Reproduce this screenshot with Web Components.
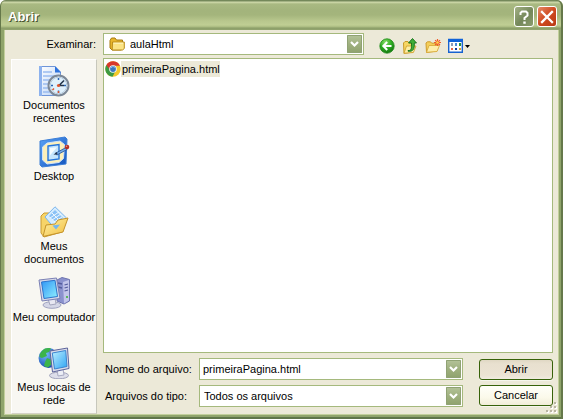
<!DOCTYPE html>
<html lang="pt-BR">
<head>
<meta charset="utf-8">
<title>Abrir</title>
<style>
html, body { height: 100%; margin: 0; }
body { background: #fff; font: 11px/13px "Liberation Sans", Arial, sans-serif; color: #000; }
</style>
</head>
<body>
<open-dialog></open-dialog>
<script>
const ICONS = {
  help: `<svg viewBox="0 0 20 20" width="20" height="20"><path d="M6.500 8V6L8 4.500h4L13.500 6v2.500L10.500 11v2" fill="none" stroke="#fff" stroke-width="2"/><path d="M9.300 14.500h2.400v2.200H9.300z" fill="#fff"/></svg>`,
  close: `<svg viewBox="0 0 20 20" width="20" height="20"><path d="M5 5l10 10M15 5L5 15" stroke="#fff" stroke-width="2.300" stroke-linecap="square"/></svg>`,
  chevron: `<svg viewBox="0 0 15 18" width="15" height="18"><path d="M4 7l3.500 3.500L11 7" fill="none" stroke="#fff" stroke-width="2.200"/></svg>`,
  folder: `<svg viewBox="0 0 16 16" width="16" height="16"><path d="M1 4.500L2.500 2H6l1.500 2H13.500V13L12 14H3L1 12z" fill="#e9b62c" stroke="#a67a10"/><path d="M3.500 6H15.300V12.500L13.500 14H3.200z" fill="#fbe384" stroke="#b98c1c"/><path d="M4.500 7.200H14" stroke="#fff6c4"/></svg>`,
  chrome: `<svg viewBox="0 0 16 16" width="16" height="16"><circle cx="8" cy="8" r="7.700" fill="#f3c92c"/><path d="M8 8L1.400 4A7.700 7.700 0 0 0 7.500 15.700L10.500 10z" fill="#3d9a43"/><path d="M1.400 4A7.700 7.700 0 0 1 15 4.800H8L5 9z" fill="#d8382c"/><circle cx="8" cy="8" r="3.800" fill="#f4f7fa"/><circle cx="8" cy="8" r="2.900" fill="#3c78bd"/><path d="M6 7a2.200 2.200 0 0 1 3.800-.5" stroke="#9cc7ef" fill="none"/></svg>`,
  back: `<svg viewBox="0 0 16 16" width="16" height="16"><defs><radialGradient id="g" cx=".4" cy=".25" r=".8"><stop offset="0" stop-color="#8be06b"/><stop offset=".5" stop-color="#2fac22"/><stop offset="1" stop-color="#11730e"/></radialGradient></defs><circle cx="8" cy="8" r="7.200" fill="url(#g)" stroke="#1f8a19" stroke-width=".8"/><path d="M12.500 8H4.500M8.200 4L4.300 8l3.900 4" fill="none" stroke="#fff" stroke-width="2"/></svg>`,
  up: `<svg viewBox="0 0 16 16" width="16" height="16"><path d="M1.500 5L3 3.500H6L7 5h4v9L2 15.500z" fill="#f7d765" stroke="#c79a29"/><path d="M2 15.200L4.500 8H14l-2.600 6.500z" fill="#fdeea5" stroke="#d0a431" stroke-width=".9"/><path d="M6 12.500c3.500 .3 3.500-1.500 3.500-7.500H6.500L10.500 .5l4 4.500h-2.200c.2 6-.8 8.800-6.300 8.200z" fill="#3fae38" stroke="#14701a" stroke-width=".9"/></svg>`,
  newfolder: `<svg viewBox="0 0 16 16" width="16" height="16"><path d="M1 5L2.500 3.800H5.500L6.700 5.200H12V13L1.500 14.500z" fill="#f4cf59" stroke="#cf9c2c"/><path d="M1.500 14.300L4 7.500h10.500L12 13.500z" fill="#fdeeaa" stroke="#d9ab3c" stroke-width=".9"/><path d="M12.500 1v7M9 4.500h7M10.100 2.100l4.900 4.900M15 2.100L10.100 7" stroke="#ef5a29" stroke-width="1.200"/><circle cx="12.500" cy="4.500" r="1.300" fill="#ffd44d"/></svg>`,
  views: `<svg viewBox="0 0 23 16" width="23" height="16"><path d="M.7 1.500H14.300V14.300H.7z" fill="#fff" stroke="#1763cf" stroke-width="1.400"/><path d="M0 1h15v3H0z" fill="#0f62d8"/><path d="M3 5h2v3H3z" fill="#8f9bb5"/><path d="M7 5h2v3H7z" fill="#498ad8"/><path d="M11 5h2v3h-2z" fill="#25913a"/><path d="M3 10h2v2H3z" fill="#e2674c"/><path d="M7 10h2v2H7z" fill="#123a9c"/><path d="M11 10h2v2h-2z" fill="#d9a32b"/><path d="M17 7h5l-2.500 3z" fill="#000"/></svg>`,
  recent: `<svg viewBox="0 0 32 32" width="32" height="32"><defs><linearGradient id="p" x2="1" y2="1"><stop stop-color="#fff"/><stop offset="1" stop-color="#b9d2f6"/></linearGradient></defs><path d="M1.500 1.500H17L22.500 7V30.500H1.500z" fill="url(#p)" stroke="#6f95d8"/><path d="M1 1h3v30H1z" fill="#8db2ee"/><path d="M17 1v6.500h6z" fill="#2f73dc"/><path d="M5 7h9M5 11h13M5 15h8M5 19h5M5 23h5M5 27h8" stroke="#9bbcf0" stroke-width="1.500"/><circle cx="20.500" cy="20.500" r="10" fill="#f7fbff" stroke="#7b8796" stroke-width="2"/><circle cx="20.500" cy="20.500" r="8.300" fill="#dff0fc" stroke="#afc7dc"/><path d="M21 20.500l5-5M21 20.500h5" stroke="#24374e" stroke-width="1.600"/><path d="M20.500 13v2M28 20.500h-2M13 20.500h2M20.500 28v-2.500" stroke="#2a64b4" stroke-width="1.500"/><circle cx="20.500" cy="20.500" r="1.600" fill="#e0542b"/><path d="M14.500 25l1.500-1.500M20.500 28v-2" stroke="#e0542b" stroke-width="1.500"/></svg>`,
  desktop: `<svg viewBox="0 0 32 32" width="32" height="32"><defs><linearGradient id="d" x2="1" y2="1"><stop stop-color="#5ba4f7"/><stop offset="1" stop-color="#1252bc"/></linearGradient></defs><path d="M2 5L27 1l2 2-1 25L4 31l-2-2z" fill="url(#d)" stroke="#3d7fd6"/><path d="M4.500 11L9 7l13-2 4.500 3.500-1 14-4.500 4-12 1.500-4.500-4z" fill="#fdf0ba" stroke="#cfe3fa"/><path d="M10 10l11-1.500V23l-11 1.500z" fill="#c5e5fd" stroke="#2475dc" stroke-width="1.400"/><path d="M12 12l7-.8-7 8z" fill="#f4fbff"/><path d="M17 17.500l11-6 1 2-10 5.500z" fill="#75aeea" stroke="#1f4d93" stroke-width=".8"/><path d="M15.500 18.700l3-2.700 1.200 2.200z" fill="#26364d"/><circle cx="29" cy="11" r="2.300" fill="#b53227"/><circle cx="28.500" cy="10.300" r=".8" fill="#f09e83"/></svg>`,
  documents: `<svg viewBox="0 0 32 32" width="32" height="32"><defs><linearGradient id="f" x2="1" y2="1"><stop stop-color="#fff3a9"/><stop offset="1" stop-color="#f2bd3e"/></linearGradient></defs><path d="M3 10l3-3h5l2 2 11 2v15L6 31l-3-4z" fill="#f7d468" stroke="#c99a30"/><path d="M7 11L17 .8 28.500 12 18 24z" fill="#d4ecff" stroke="#79b4ec"/><path d="M11 10l6-6 8 8-6 5z" fill="#8bc2f6"/><path d="M12 12l9-6M14 14l9-6M16 16l8-5M14 7l9 9" stroke="#eef8ff"/><path d="M5 30.500L8 19l9-1 3-4 10-2-5 14z" fill="url(#f)" stroke="#c4932b"/><path d="M14.500 19.500l3.500 4 4-5z" fill="#74b7ef"/></svg>`,
  computer: `<svg viewBox="0 0 32 32" width="32" height="32"><defs><linearGradient id="s" x2="1" y2="1"><stop stop-color="#2f95f5"/><stop offset="1" stop-color="#8ff0ff"/></linearGradient></defs><path d="M19 3l5-2.500 7.500 2V24L26 27l-7-3z" fill="#8b92cd" stroke="#6e74af"/><path d="M25 5l6-2v20.500L26 26.500z" fill="#c2c5ea"/><path d="M20 6l4 1M20 10l4 1M26.500 8l3.500-1M26.500 11l3.500-1M26.500 14l3.500-1" stroke="#545b9c" stroke-width="1.300"/><path d="M28 19h2v2h-2z" fill="#59b75b"/><ellipse cx="14" cy="28" rx="9" ry="3.300" fill="#d4d6e6" stroke="#9fa2bf"/><path d="M10 22l7-1 1 6-6 1z" fill="#e8e8f2" stroke="#a4a6bd"/><path d="M1 3L18.500 1 22 21.500 4 24z" fill="#d6d8e9" stroke="#7b81b5"/><path d="M3.500 5L17 3.300 19.500 19.500 6 21.500z" fill="url(#s)" stroke="#2d74cb"/></svg>`,
  network: `<svg viewBox="0 0 32 32" width="32" height="32"><defs><linearGradient id="n" x2="1" y2="1"><stop stop-color="#bcefff"/><stop offset="1" stop-color="#2fa4f3"/></linearGradient><radialGradient id="e" cx=".35" cy=".3" r=".8"><stop stop-color="#78beff"/><stop offset="1" stop-color="#0b3da8"/></radialGradient></defs><circle cx="10.500" cy="11" r="10" fill="url(#e)"/><path d="M4 4C7 .8 10 .8 13 1.500L11 5 8 6l1 3-5 2-2.500-1C1.500 7 2.500 5.500 4 4zM9 11l5 2v4l-4 3.500L6 19l1-4z" fill="#3cb44b"/><ellipse cx="21" cy="28.500" rx="9.500" ry="3.300" fill="#dddeea" stroke="#9fa1ba"/><path d="M19 22l6 0 1 6-6 1z" fill="#eceef6" stroke="#a8aac2"/><path d="M12 4L29.500 1 31 21.500 14.500 25z" fill="#d9dbe9" stroke="#5e659c"/><path d="M14.300 6L27.700 3.500 29 19.500 16.500 22z" fill="url(#n)" stroke="#3b84d0"/></svg>`
};

class UiIcon extends HTMLElement {
  connectedCallback() {
    this.attachShadow({ mode: 'open' }).innerHTML =
      `<style>:host{display:inline-flex;flex:none}svg{display:block}</style>` + ICONS[this.getAttribute('name')];
    this.setAttribute('aria-hidden', 'true');
  }
}
customElements.define('ui-icon', UiIcon);

class TitleBar extends HTMLElement {
  connectedCallback() {
    this.attachShadow({ mode: 'open' }).innerHTML = `
<style>
:host { display: flex; align-items: center; gap: 3px; height: 30px; box-sizing: border-box; padding: 3px 6px 0 8px;
  background: linear-gradient(#74885a 0 1px, #d3dcae 2px, #a9b982 4px, #a3b47c 10px, #a4b57c 15px, #b8c78d 21px, #bfce93 25px, #a9ba80 27px, #8b9e68 28px, #94a670 30px); }
h1 { flex: 1; margin: 0; font-size: 13px; line-height: 18px; font-weight: bold; color: #fff; text-shadow: 1px 1px 0 #44502f; }
button { display: flex; align-items: center; justify-content: center; width: 20px; height: 21px; padding: 0; border: 1px solid #fff; border-radius: 3px; overflow: hidden; }
.help { background: linear-gradient(135deg, #a3b185, #74875a 55%, #8b9c6d); }
.close { background: linear-gradient(135deg, #e58a68, #cf4a20 50%, #b93a14); }
</style>
<h1><slot></slot></h1>
<button class="help" aria-label="Ajuda"><ui-icon name="help"></ui-icon></button>
<button class="close" aria-label="Fechar"><ui-icon name="close"></ui-icon></button>`;
  }
}
customElements.define('title-bar', TitleBar);

class ComboField extends HTMLElement {
  connectedCallback() {
    const value = this.getAttribute('value');
    const icon = this.getAttribute('icon');
    const arrow = `<ui-icon name="chevron"></ui-icon>`;
    const control = this.hasAttribute('editable')
      ? `<input id="c" type="text" value="${value}"><button class="arrow" aria-label="Mostrar lista">${arrow}</button>`
      : `<select id="c"><option>${value}</option></select>${icon ? `<ui-icon class="lead" name="${icon}"></ui-icon>` : ''}<span class="arrow">${arrow}</span>`;
    this.attachShadow({ mode: 'open' }).innerHTML = `
<style>
:host { display: grid; grid-template-columns: var(--label-width, 96px) 1fr; align-items: center; }
label { padding: var(--label-padding, 0 0 0 2px); text-align: var(--label-align, left); }
.box { display: grid; grid-template-columns: 1fr 15px; align-items: center; height: 22px; box-sizing: border-box;
  padding: 0 1px 0 0; background: #fff; border: 1px solid #a5b97d; }
input, select { grid-row: 1; grid-column: 1; min-width: 0; width: 100%; height: 18px; box-sizing: border-box; margin: 0; border: 0; padding: 0 3px;
  appearance: none; background: transparent; font: inherit; color: inherit; outline: 0; }
select { grid-column: 1 / 3; padding-left: ${icon ? 26 : 4}px; }
.lead { grid-row: 1; grid-column: 1; margin-left: 5px; pointer-events: none; }
.arrow { grid-row: 1; grid-column: 2; display: flex; width: 15px; height: 18px; box-sizing: border-box; padding: 0; border: 0; border-radius: 1px; pointer-events: none;
  background: linear-gradient(#b4c399, #9fb07f 50%, #8fa26d); box-shadow: inset 0 0 0 1px #90a274; }
button.arrow { pointer-events: auto; }
</style>
<label for="c">${this.getAttribute('label')}</label><div class="box">${control}</div>`;
  }
}
customElements.define('combo-field', ComboField);

class ToolButton extends HTMLElement {
  connectedCallback() {
    this.attachShadow({ mode: 'open' }).innerHTML = `
<style>:host{display:block}button{display:flex;padding:0;border:0;background:none}</style>
<button aria-label="${this.getAttribute('label')}"><ui-icon name="${this.getAttribute('icon')}"></ui-icon></button>`;
  }
}
customElements.define('tool-button', ToolButton);

class PlaceItem extends HTMLElement {
  connectedCallback() {
    this.attachShadow({ mode: 'open' }).innerHTML = `
<style>
:host { display: flex; flex: 1; justify-content: center; }
button { display: flex; flex-direction: column; align-items: center; gap: 2px; width: 100%; padding: 5px 0 0; border: 0; background: none; font: inherit; color: inherit; text-align: center; }
span { max-width: 84px; }
</style>
<button><ui-icon name="${this.getAttribute('icon')}"></ui-icon><span><slot></slot></span></button>`;
  }
}
customElements.define('place-item', PlaceItem);

class FileItem extends HTMLElement {
  connectedCallback() {
    this.attachShadow({ mode: 'open' }).innerHTML = `
<style>
:host { display: inline-flex; align-items: center; }
span { padding: 2px 0 1px 1px; background: #ece9d8; }
</style>
<ui-icon name="${this.getAttribute('icon')}"></ui-icon><span><slot></slot></span>`;
  }
}
customElements.define('file-item', FileItem);

class PushButton extends HTMLElement {
  connectedCallback() {
    this.attachShadow({ mode: 'open' }).innerHTML = `
<style>
:host { display: block; }
button { display: block; width: 100%; height: 21px; padding: 0; border: 1px solid #37620a; border-radius: 3px; font: inherit; color: inherit;
  background: linear-gradient(#fffffa, #fbf9ea 60%, #f1edd9); box-shadow: 0 1px 0 #fff8; }
:host([pressed]) button { background: linear-gradient(#e0d8c4, #e8e0cf 20%, #ebe3d3 80%, #f0ebe0); }
</style>
<button><slot></slot></button>`;
  }
}
customElements.define('push-button', PushButton);

class OpenDialog extends HTMLElement {
  connectedCallback() {
    this.attachShadow({ mode: 'open' }).innerHTML = `
<style>
:host { display: flex; flex-direction: column; position: relative; min-height: 100vh; box-sizing: border-box; border-radius: 6px 6px 0 0; overflow: hidden; background: #ece9d8; }
main { flex: 1; display: flex; flex-direction: column; gap: 4px; padding: 3px 6px 1px 7px;
  border: solid #8fa46b; border-width: 0 4px 4px;
  box-shadow: inset 1px 0 #c2cf9b, inset -1px 0 #c2cf9b, inset 0 -1px #c2cf9b; }
.frame { position: absolute; inset: 0; pointer-events: none; border-radius: 6px 6px 0 0; box-shadow: inset 1px 0 #65784a, inset -2px 0 #65784a, inset 0 -2px #5f7549; }
.look { display: flex; align-items: center; }
.look combo-field { width: 353px; --label-width: 92px; --label-align: right; --label-padding: 0 7px 0 0; }
.tools { display: flex; gap: 7px; padding: 4px 0 0 15px; }
.body { flex: 1; display: grid; grid-template-columns: 86px 1fr; gap: 6px; }
nav { display: flex; flex-direction: column; background: #f8f7f2; box-sizing: border-box; border: 1px solid #fff; border-right-color: #c7c7bc; border-bottom-color: #d4d2c6; }
.content { display: flex; flex-direction: column; gap: 5px; margin-top: -1px; }
.list { flex: 1; border: 1px solid #a5b97d; background: #fff; padding: 2px 1px; }
.foot { display: grid; grid-template-columns: 1fr 74px; gap: 16px; padding-bottom: 7px; }
.col { display: grid; align-content: start; gap: 5px; }
.buttons { padding-top: 1px; }
.grip { position: absolute; right: 6px; bottom: 6px; }
</style>
<title-bar>Abrir</title-bar>
<main>
  <div class="look">
    <combo-field label="Examinar:" value="aulaHtml" icon="folder"></combo-field>
    <div class="tools">
      <tool-button icon="back" label="Voltar"></tool-button>
      <tool-button icon="up" label="Um nível acima"></tool-button>
      <tool-button icon="newfolder" label="Criar nova pasta"></tool-button>
      <tool-button icon="views" label="Menu Exibir"></tool-button>
    </div>
  </div>
  <div class="body">
    <nav>
      <place-item icon="recent">Documentos recentes</place-item>
      <place-item icon="desktop">Desktop</place-item>
      <place-item icon="documents">Meus<br>documentos</place-item>
      <place-item icon="computer">Meu computador</place-item>
      <place-item icon="network">Meus locais de rede</place-item>
    </nav>
    <div class="content">
      <div class="list"><file-item icon="chrome">primeiraPagina.html</file-item></div>
      <div class="foot">
        <div class="col">
          <combo-field label="Nome do arquivo:" value="primeiraPagina.html" editable></combo-field>
          <combo-field label="Arquivos do tipo:" value="Todos os arquivos"></combo-field>
        </div>
        <div class="col buttons">
          <push-button pressed>Abrir</push-button>
          <push-button>Cancelar</push-button>
        </div>
      </div>
    </div>
  </div>
</main>
<svg class="grip" width="11" height="11" viewBox="0 0 11 11" aria-hidden="true"><path d="M9 1h2v2H9zM9 5h2v2H9zM5 5h2v2H5zM9 9h2v2H9zM5 9h2v2H5zM1 9h2v2H1z" fill="#fff"/><path d="M8 0h2v2H8zM8 4h2v2H8zM4 4h2v2H4zM8 8h2v2H8zM4 8h2v2H4zM0 8h2v2H0z" fill="#b8b4a2"/></svg>
<div class="frame"></div>`;
  }
}
customElements.define('open-dialog', OpenDialog);
</script>
</body>
</html>
